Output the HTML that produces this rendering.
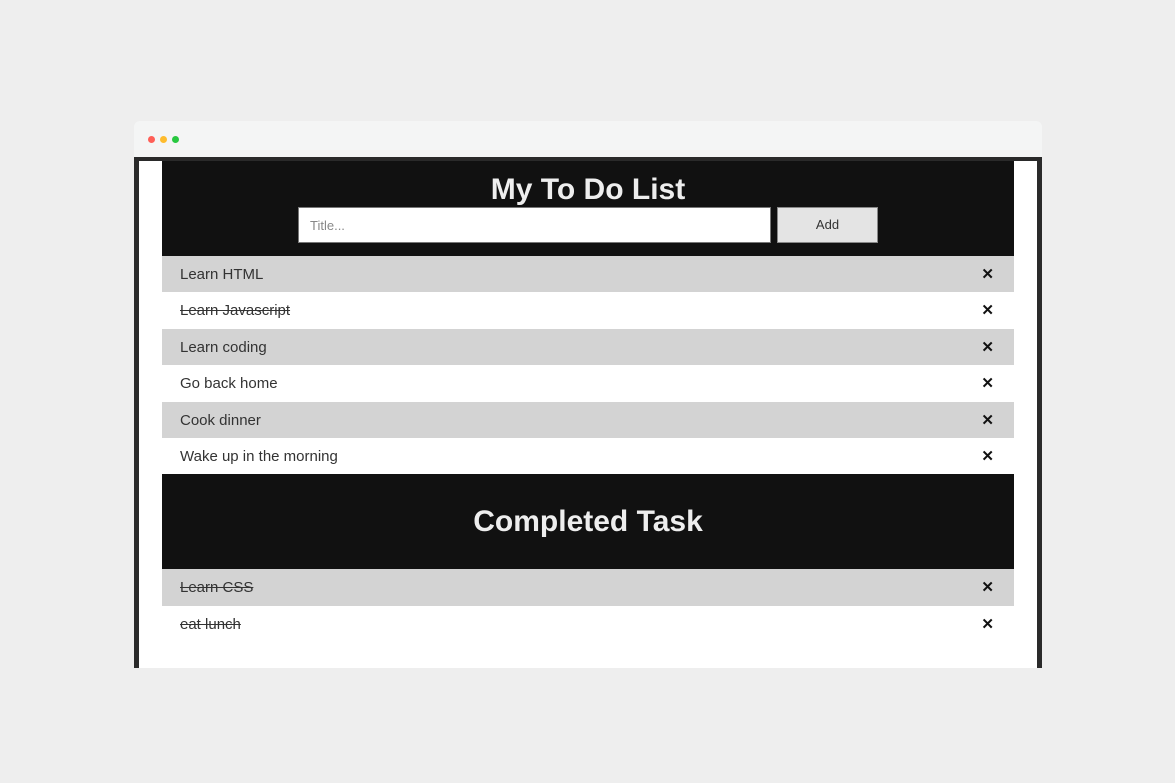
<!DOCTYPE html>
<html><head><style>
*{margin:0;padding:0;box-sizing:border-box}
body{width:1175px;height:783px;background:#eeeeee;font-family:"Liberation Sans",Arial,sans-serif;position:relative;overflow:hidden}
.bar{position:absolute;left:134px;top:121px;width:908px;height:36px;background:#f4f5f5;border-radius:6px 6px 0 0}
.dot{position:absolute;top:136px;width:7px;height:7px;border-radius:50%}
.frame{position:absolute;left:134px;top:157px;width:908px;height:511px;background:#fff;border:solid #2a2a2a;border-width:4px 5px 0 5px}
.wrap{position:absolute;left:162px;top:161px;width:852px}
.head{background:#111;height:95px;position:relative}
.head h1{color:#eee;font-size:30px;text-align:center;position:absolute;top:12px;width:100%;font-weight:bold}
.inp{position:absolute;left:136px;top:46px;width:473px;height:36px;background:#fff;border:1px solid #777;color:#888;font-size:13px;padding:10px 11px}
.add{position:absolute;left:615px;top:46px;width:101px;height:36px;background:#e4e4e4;border:1px solid #888;font-size:13px;color:#333;text-align:center;line-height:34px}
.row{height:36.4px;position:relative;font-size:15px;color:#333;padding-left:18px;line-height:38px}
.row.g{background:#d3d3d3}
.row.s span{text-decoration:line-through}
.row b{position:absolute;right:20px;top:0;font-size:15px;color:#111}
.ct{background:#111;height:95px;color:#eee;font-size:30px;font-weight:bold;text-align:center;line-height:95px}
</style></head><body>
<div class="bar"></div>
<div class="dot" style="left:148px;background:#ff5f57"></div>
<div class="dot" style="left:160px;background:#febc2e"></div>
<div class="dot" style="left:172px;background:#28c840"></div>
<div class="frame"></div>
<div class="wrap">
<div class="head"><h1>My To Do List</h1><div class="inp">Title...</div><div class="add">Add</div></div>
<div class="row g"><span>Learn HTML</span><b>✕</b></div>
<div class="row s"><span>Learn Javascript</span><b>✕</b></div>
<div class="row g"><span>Learn coding</span><b>✕</b></div>
<div class="row"><span>Go back home</span><b>✕</b></div>
<div class="row g"><span>Cook dinner</span><b>✕</b></div>
<div class="row"><span>Wake up in the morning</span><b>✕</b></div>
<div class="ct">Completed Task</div>
<div class="row g s"><span>Learn CSS</span><b>✕</b></div>
<div class="row s"><span>eat lunch</span><b>✕</b></div>
</div>
</body></html>
